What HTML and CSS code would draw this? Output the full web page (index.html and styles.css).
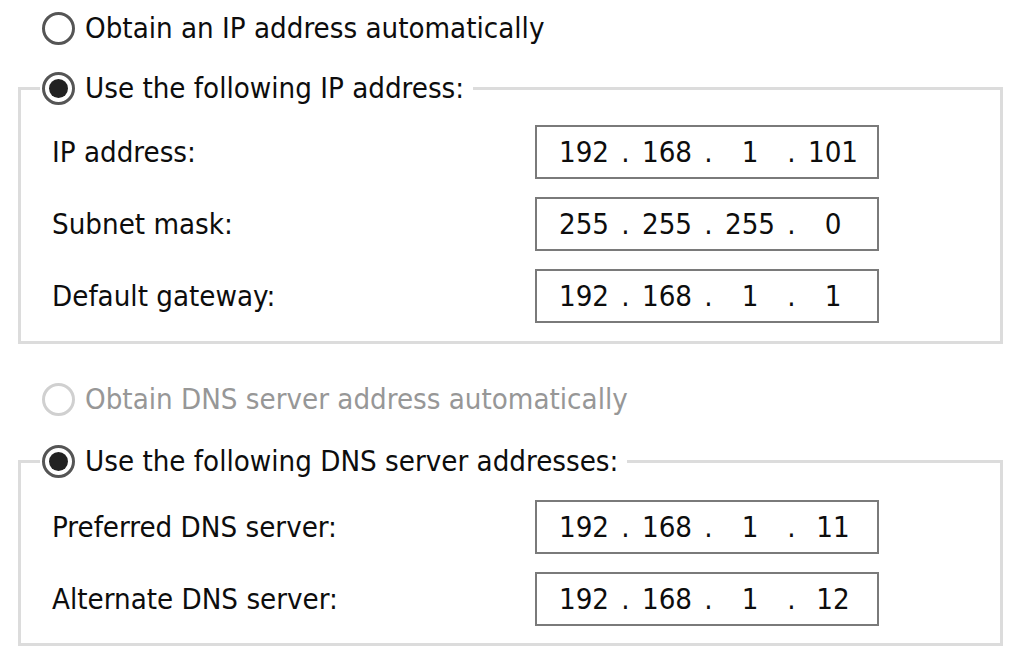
FILE: index.html
```html
<!DOCTYPE html>
<html lang="en">
<head>
<meta charset="utf-8">
<title>IP settings</title>
<link rel="stylesheet" href="styles.css">
</head>
<body>
<div class="dialog">
  <div class="option option-top">
    <span class="radio"></span>
    <span class="option-text">Obtain an IP address automatically</span>
  </div>

  <fieldset class="group group-ip">
    <legend class="group-legend">
      <span class="option">
        <span class="radio checked"></span>
        <span class="option-text">Use the following IP address:</span>
      </span>
    </legend>
    <div class="rows">
      <div class="field-row">
        <span class="field-label">IP address:</span>
        <div class="ip-box"><span class="seg">192</span><span class="dot">.</span><span class="seg">168</span><span class="dot">.</span><span class="seg">1</span><span class="dot">.</span><span class="seg">101</span></div>
      </div>
      <div class="field-row">
        <span class="field-label">Subnet mask:</span>
        <div class="ip-box"><span class="seg">255</span><span class="dot">.</span><span class="seg">255</span><span class="dot">.</span><span class="seg">255</span><span class="dot">.</span><span class="seg">0</span></div>
      </div>
      <div class="field-row">
        <span class="field-label">Default gateway:</span>
        <div class="ip-box"><span class="seg">192</span><span class="dot">.</span><span class="seg">168</span><span class="dot">.</span><span class="seg">1</span><span class="dot">.</span><span class="seg">1</span></div>
      </div>
    </div>
  </fieldset>

  <div class="option option-top option-disabled">
    <span class="radio disabled"></span>
    <span class="option-text">Obtain DNS server address automatically</span>
  </div>

  <fieldset class="group group-dns">
    <legend class="group-legend">
      <span class="option">
        <span class="radio checked"></span>
        <span class="option-text">Use the following DNS server addresses:</span>
      </span>
    </legend>
    <div class="rows">
      <div class="field-row">
        <span class="field-label">Preferred DNS server:</span>
        <div class="ip-box"><span class="seg">192</span><span class="dot">.</span><span class="seg">168</span><span class="dot">.</span><span class="seg">1</span><span class="dot">.</span><span class="seg">11</span></div>
      </div>
      <div class="field-row">
        <span class="field-label">Alternate DNS server:</span>
        <div class="ip-box"><span class="seg">192</span><span class="dot">.</span><span class="seg">168</span><span class="dot">.</span><span class="seg">1</span><span class="dot">.</span><span class="seg">12</span></div>
      </div>
    </div>
  </fieldset>
</div>
</body>
</html>
```

FILE: styles.css
```css
* {
  box-sizing: border-box;
}

html, body {
  margin: 0;
  background: #ffffff;
}

body {
  font-family: "DejaVu Sans Condensed", "Liberation Sans", sans-serif;
  font-size: 29.2px;
  color: #0d0d0d;
  width: 1020px;
  height: 666px;
  overflow: hidden;
}

.dialog {
  padding: 8px 17px 0 18px;
}

.option {
  display: flex;
  align-items: center;
  gap: 10px;
  height: 40px;
  white-space: nowrap;
}

.option-top {
  padding-left: 24px;
}

.option-disabled {
  margin-top: 35px;
  color: #979797;
}

.radio {
  flex: none;
  width: 33px;
  height: 33px;
  border: 3px solid #555555;
  border-radius: 50%;
  background: #ffffff;
  display: flex;
  align-items: center;
  justify-content: center;
}

.radio.checked::after {
  content: "";
  width: 19px;
  height: 19px;
  border-radius: 50%;
  background: #222222;
}

.radio.disabled {
  border-color: #d0d0d0;
}

.group {
  margin: 20px 0 0 0;
  padding: 17px 0 18px 0;
  border: 3px solid #dcdcdc;
  min-inline-size: 0;
}

.group-dns {
  margin-top: 22px;
  padding-top: 19px;
  padding-bottom: 17px;
}

.group-legend {
  margin-left: 19px;
  padding: 0 9px 0 2px;
}

.rows {
  display: flex;
  flex-direction: column;
  gap: 18px;
  padding-left: 31px;
}

.field-row {
  display: flex;
  align-items: center;
  height: 54px;
}

.field-label {
  width: 483px;
  flex: none;
  white-space: nowrap;
}

.ip-box {
  width: 344px;
  height: 54px;
  border: 2px solid #7a7a7a;
  display: flex;
  align-items: center;
  padding-left: 14px;
  background: #ffffff;
  color: #0d0d0d;
}

.seg {
  width: 66px;
  text-align: center;
}

.dot {
  width: 17px;
  text-align: center;
}
```
